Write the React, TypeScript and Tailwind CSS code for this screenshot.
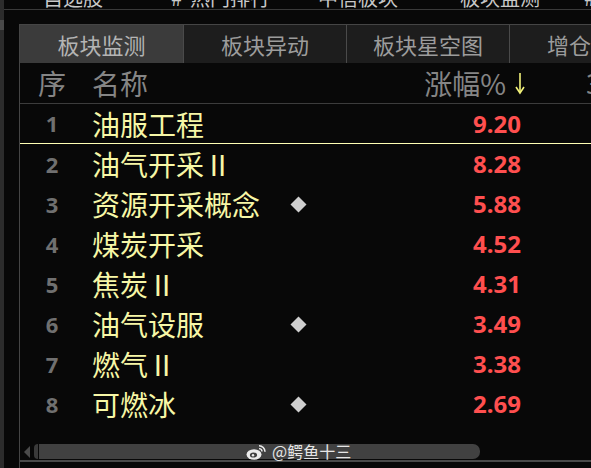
const CJK = "font-['Noto_Sans_CJK_SC','Noto_Sans',sans-serif]";
const NUM = "font-['Noto_Sans','Liberation_Sans',sans-serif]";

type Row = { name: string; flag?: boolean; pct: string };

const ROWS: Row[] = [
  { name: "油服工程", pct: "9.20" },
  { name: "油气开采Ⅱ", pct: "8.28" },
  { name: "资源开采概念", flag: true, pct: "5.88" },
  { name: "煤炭开采", pct: "4.52" },
  { name: "焦炭Ⅱ", pct: "4.31" },
  { name: "油气设服", flag: true, pct: "3.49" },
  { name: "燃气Ⅱ", pct: "3.38" },
  { name: "可燃冰", flag: true, pct: "2.69" },
];

const TABS = ["板块监测", "板块异动", "板块星空图", "增仓"];

function Diamond() {
  return (
    <svg width="17" height="17" viewBox="0 0 17 17">
      <path d="M8.5 0.5 L16.5 8.5 L8.5 16.5 L0.5 8.5 Z" fill="#cfcfcf" />
    </svg>
  );
}

function SortArrow() {
  return (
    <svg width="10" height="24" viewBox="0 0 10 24" className="ml-[9px]">
      <path d="M5 2 V21" stroke="#f2f27a" strokeWidth="1.6" />
      <path d="M1 16 L5 22 L9 16" stroke="#f2f27a" strokeWidth="1.6" fill="none" />
    </svg>
  );
}

function WeiboLogo() {
  return (
    <svg width="21" height="16" viewBox="0 0 21 16">
      <ellipse cx="8" cy="10.5" rx="7.5" ry="5.2" fill="#ececec" />
      <ellipse cx="7.5" cy="11" rx="3.6" ry="2.6" fill="#414141" />
      <circle cx="7" cy="11.3" r="1.2" fill="#ececec" />
      <path d="M13 1.8 A6 6 0 0 1 19 7.8" stroke="#ececec" strokeWidth="1.6" fill="none" />
      <path d="M13 4.6 A3 3 0 0 1 16 7.6" stroke="#ececec" strokeWidth="1.4" fill="none" />
    </svg>
  );
}

export default function App() {
  return (
    <div className={`w-[591px] h-[468px] bg-[#080808] overflow-hidden flex ${CJK}`}>
      {/* left window edge */}
      <div className="w-[4px] h-full bg-[#2c2c2c] flex flex-col">
        <div className="h-[20px]" />
        <div className="h-[10px] bg-[#4a4a4a]" />
      </div>

      <div className="flex-1 flex flex-col min-w-0">
        {/* clipped top menu row */}
        <div className="h-[9px] overflow-hidden border-b border-[#3a3a3a] box-content">
          <div className="flex text-[20px] leading-[20px] text-[#c8c8c8] whitespace-nowrap -mt-[12px]">
            <span className="ml-[39px]">自选股</span>
            <span className="ml-[68px]">#</span>
            <span className="ml-[8px]">热门排行</span>
            <span className="ml-[48px]">中信板块</span>
            <span className="ml-[62px]">板块监测</span>
            <span className="ml-[44px]">#</span>
          </div>
        </div>

        <div className="flex-1 flex pt-[14px]">
          <div className="w-[15px]" />
          {/* panel */}
          <div className="flex-1 flex flex-col border-l border-t border-[#454545] min-w-0">
            {/* tabs */}
            <div className="h-[38px] flex">
              {TABS.map((t, i) => (
                <div
                  key={t}
                  className={`shrink-0 flex items-center text-[22px] leading-[26px] ${i === 0 ? "bg-[#3b3b3b] w-[163px] text-[#b4b4b4]" : "bg-[#1d1d1d] border-l border-[#4a4a4a] w-[163px] text-[#9c9c9c]"} ${i === 3 ? "justify-start pl-[37px]" : "justify-center"}`}
                >
                  {t}
                </div>
              ))}
            </div>

            {/* header */}
            <div className="h-[41px] flex items-center border-b border-[#3c3c3c] text-[28px] text-[#858585] whitespace-nowrap">
              <div className="w-[64px] shrink-0 text-center">序</div>
              <div className="w-[198px] shrink-0 pl-[8px]">名称</div>
              <div className="w-[32px] shrink-0" />
              <div className="w-[211px] shrink-0 flex items-center justify-end">
                涨幅%
                <SortArrow />
              </div>
              <div className={`ml-[61px] ${NUM}`}>3</div>
            </div>

            {/* rows */}
            <div className="flex flex-col">
              {ROWS.map((r, i) => (
                <div
                  key={i}
                  className={`h-[40px] flex items-center whitespace-nowrap ${i === 0 ? "border-b border-[#ffffb4]" : ""}`}
                >
                  <div className={`w-[64px] shrink-0 text-center text-[22px] font-bold text-[#707070] ${NUM}`}>
                    {i + 1}
                  </div>
                  <div className="w-[198px] shrink-0 pl-[8px] text-[28px] leading-[40px] text-[#f7f7a6]">
                    {r.name}
                  </div>
                  <div className="w-[32px] shrink-0 flex justify-center">{r.flag && <Diamond />}</div>
                  <div className={`w-[207px] shrink-0 text-right text-[24px] font-bold text-[#ff4f4f] ${NUM}`}>
                    {r.pct}
                  </div>
                </div>
              ))}
            </div>

            <div className="flex-1" />

            {/* horizontal scrollbar */}
            <div className="h-[15px] flex items-center border-b-[2px] border-[#4a4a4a] box-content pb-[1px]">
              <svg width="8" height="14" viewBox="0 0 8 14" className="ml-[3px]">
                <path d="M7 1 L1 7 L7 13 Z" fill="#4a4a4a" />
              </svg>
              <div className="ml-[3px] w-[4px] h-[15px] rounded-l-full bg-[#3a3a3a]" />
              <div className="ml-[1px] w-[441px] h-[15px] rounded-r-[7px] bg-[#414141] flex items-center pl-[207px] text-[16px] leading-[15px] text-[#e6e6e6]">
                <WeiboLogo />
                <span className="ml-[5px]">@鳄鱼十三</span>
              </div>
            </div>
            <div className="h-[6px]" />
          </div>
        </div>
      </div>
    </div>
  );
}
